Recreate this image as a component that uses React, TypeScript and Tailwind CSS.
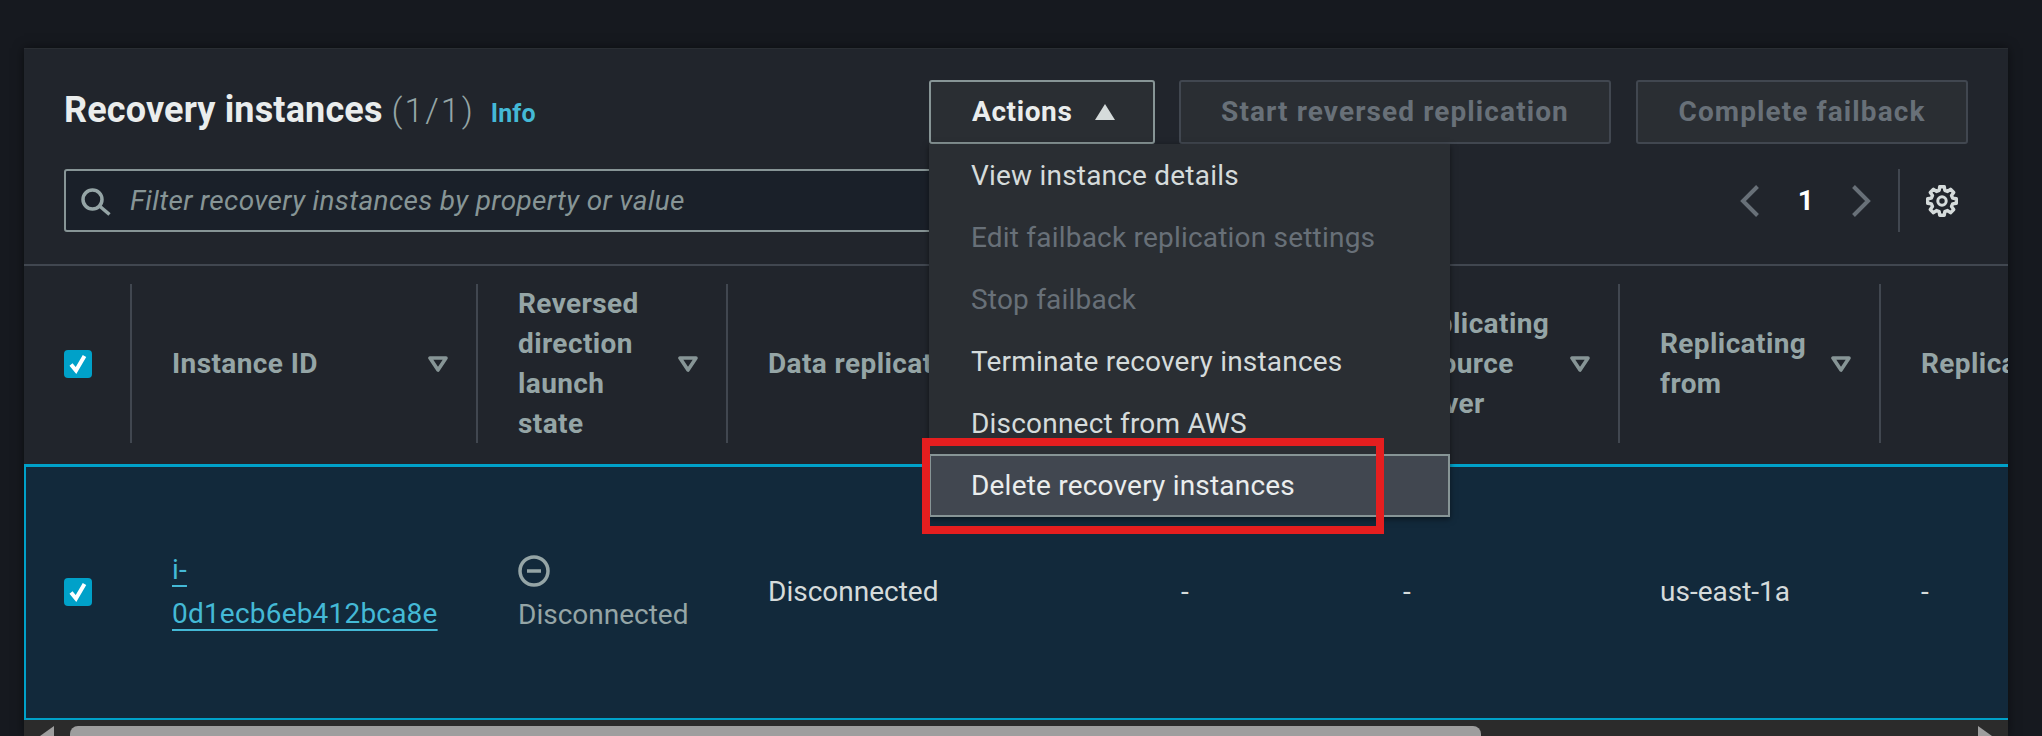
import React from "react";

const columns =
  "grid w-max grid-cols-[106px_346px_250px_413px_222px_257px_261px_300px]";
const rowColumns =
  "grid w-max grid-cols-[105px_346px_250px_413px_222px_257px_261px_300px]";

function CheckBox() {
  return (
    <div className="flex h-[28px] w-[28px] items-center justify-center rounded-[4px] bg-[#00a1c9]">
      <svg width="20" height="22" viewBox="0 0 20 22" fill="none">
        <path d="M3 11.5 L8 17.5 L16.5 3" stroke="#fff" strokeWidth="4" />
      </svg>
    </div>
  );
}

function FilterIcon() {
  return (
    <svg width="20" height="16" viewBox="0 0 20 16" fill="none" className="shrink-0">
      <path d="M2 2 H18 L10 14 Z" stroke="#879596" strokeWidth="3.6" strokeLinejoin="round" />
    </svg>
  );
}

function Chevron({ flip }: { flip?: boolean }) {
  return (
    <svg width="20" height="34" viewBox="0 0 20 34" fill="none" className={flip ? "rotate-180" : ""}>
      <path d="M17.5 2.5 L3 17 L17.5 31.5" stroke="#687078" strokeWidth="4" />
    </svg>
  );
}

function GearIcon() {
  // 8 teeth walked round the circle
  const pts: string[] = [];
  for (let i = 0; i < 8; i++) {
    const a = (i * Math.PI) / 4 - Math.PI / 2;
    const step = Math.PI / 4;
    const spots: [number, number][] = [
      [a - step * 0.2, 14.5],
      [a + step * 0.2, 14.5],
      [a + step * 0.33, 11],
      [a + step * 0.67, 11],
    ];
    spots.forEach(([t, r]) => pts.push(`${(17 + r * Math.cos(t)).toFixed(2)} ${(17 + r * Math.sin(t)).toFixed(2)}`));
  }
  return (
    <svg width="34" height="34" viewBox="0 0 34 34" fill="none">
      <path d={`M${pts.join(" L")} Z`} stroke="#d5dbdb" strokeWidth="3.4" strokeLinejoin="round" />
      <circle cx="17" cy="17" r="4.2" stroke="#d5dbdb" strokeWidth="3" />
    </svg>
  );
}

function HeaderCell({ label }: { label?: string }) {
  return (
    <div className="mt-[18px] mb-[21px] flex h-[159px] items-center justify-between gap-[14px] overflow-hidden border-l-2 border-[#414750] pl-[40px] pr-[28px]">
      {label && <span className="font-bold tracking-[0.4px] text-[#95a5a6]">{label}</span>}
      {label && <FilterIcon />}
    </div>
  );
}

function MenuItem({ label, disabled }: { label: string; disabled?: boolean }) {
  return (
    <div className={`flex h-[62px] items-center pt-[2px] pl-[42px] ${disabled ? "text-[#687078]" : "text-[#d5dbdb]"}`}>
      {label}
    </div>
  );
}

export default function App() {
  return (
    <div className="h-[736px] w-[2042px] overflow-hidden bg-[#16191f] pt-[48px] pr-[34px] pl-[24px] font-['Roboto',sans-serif] text-[28px] leading-[40px] tracking-[0.2px]">
      <div className="relative h-[688px] overflow-hidden border-t border-[#2a2e33] bg-[#21252c] shadow-[0_0_10px_rgba(0,0,0,0.5)]">
        <div className="border-b-2 border-[#414750] pt-[31px] pr-[40px] pb-[32px] pl-[40px]">
          <div className="flex h-[64px] items-center">
            <h2 className="flex items-baseline text-[36px] font-bold tracking-[0.15px] text-[#eaeded]">
              Recovery instances
              <span className="ml-[9px] text-[34px] font-light tracking-[2px] text-[#95a5a6]">(1/1)</span>
              <span className="ml-[16px] text-[25px] text-[#44b9d6]">Info</span>
            </h2>
            <div className="ml-auto flex gap-[25px]">
              <div className="relative z-10 -mr-[1px]">
                <button className="flex h-[64px] w-[226px] items-center gap-[23px] rounded-[3px] border-2 border-[#879596] bg-[#2a2e33] pl-[41px] font-bold tracking-[0.6px] text-[#eaeded]">
                  Actions
                  <svg width="20" height="16" viewBox="0 0 20 16">
                    <path d="M10 0 L20 16 H0 Z" fill="#d5dbdb" />
                  </svg>
                </button>
                <div className="absolute top-full left-0 w-[521px] bg-[#2a2e33] shadow-[0_2px_6px_rgba(0,0,0,0.5)]">
                  <MenuItem label="View instance details" />
                  <MenuItem label="Edit failback replication settings" disabled />
                  <MenuItem label="Stop failback" disabled />
                  <MenuItem label="Terminate recovery instances" />
                  <MenuItem label="Disconnect from AWS" />
                  <div className="flex h-[63px] items-center border-2 border-[#879596] bg-[#414750] pl-[40px] text-[#eaeded]">
                    Delete recovery instances
                  </div>
                  <div className="absolute top-[294px] left-[-7px] h-[96px] w-[462px] border-8 border-[#e51e1f]" />
                </div>
              </div>
              <button className="flex h-[64px] w-[432px] items-center justify-center rounded-[3px] border-2 border-[#414750] bg-[#2a2e33] font-bold tracking-[1.1px] text-[#687078]">
                Start reversed replication
              </button>
              <button className="flex h-[64px] w-[332px] items-center justify-center rounded-[3px] border-2 border-[#414750] bg-[#2a2e33] font-bold tracking-[1.1px] text-[#687078]">
                Complete failback
              </button>
            </div>
          </div>
          <div className="mt-[25px] flex h-[63px] items-center">
            <div className="flex h-full w-[1335px] items-center rounded-[3px] border-2 border-[#879596] bg-[#1a2029] pl-[15px]">
              <svg width="30" height="28" viewBox="0 0 30 28" fill="none" className="mt-[3px]">
                <circle cx="11.5" cy="11.5" r="9.5" stroke="#95a5a6" strokeWidth="3.5" />
                <path d="M18.5 18 L28.5 26.5" stroke="#95a5a6" strokeWidth="3.5" />
              </svg>
              <span className="ml-[19px] tracking-[0.35px] text-[#879596] italic">Filter recovery instances by property or value</span>
            </div>
            <div className="ml-auto flex h-full items-center pr-[9px]">
              <Chevron />
              <span className="mr-[37px] ml-[38px] font-bold text-white">1</span>
              <Chevron flip />
              <div className="ml-[27px] h-full border-l-2 border-[#414750]" />
              <div className="ml-[25px]">
                <GearIcon />
              </div>
            </div>
          </div>
        </div>

        <div className={columns}>
          <div className="mt-[18px] mb-[21px] flex h-[159px] items-center pl-[40px]">
            <CheckBox />
          </div>
          <HeaderCell label="Instance ID" />
          <HeaderCell label="Reversed direction launch state" />
          <HeaderCell label="Data replication status" />
          <HeaderCell />
          <HeaderCell label="Replicating a source server" />
          <HeaderCell label="Replicating from" />
          <HeaderCell label="Replicating to" />
        </div>

        <div className={`${rowColumns} h-[256px] border-2 border-t-[3px] border-[#00a1c9] bg-[#12293b] pb-[1px] tracking-normal text-[#d5dbdb]`}>
          <div className="flex items-center pl-[38px]">
            <CheckBox />
          </div>
          <div className="flex items-center pl-[41px]">
            <a className="w-[272px] leading-[44px] tracking-[0.2px] text-[#44b9d6] underline decoration-2 underline-offset-[6px]">i-0d1ecb6eb412bca8e</a>
          </div>
          <div className="flex flex-col justify-center pt-[5px] pl-[41px] text-[#95a5a6]">
            <svg width="32" height="32" viewBox="0 0 32 32" fill="none" className="mb-[8px]">
              <circle cx="16" cy="16" r="14" stroke="#95a5a6" strokeWidth="3.5" />
              <path d="M9 16 H23" stroke="#95a5a6" strokeWidth="3.5" />
            </svg>
            Disconnected
          </div>
          <div className="flex items-center pl-[41px]">Disconnected</div>
          <div className="flex items-center pl-[41px]">-</div>
          <div className="flex items-center pl-[41px]">-</div>
          <div className="flex items-center pl-[41px]">us-east-1a</div>
          <div className="flex items-center pl-[41px]">-</div>
        </div>

        <div className="flex h-[16px] bg-[#2b2b2b] pt-[6px]">
          <svg width="14" height="10" viewBox="0 0 14 10" className="ml-[16px]">
            <path d="M14 0 V10 H0 Z" fill="#9e9e9e" />
          </svg>
          <div className="ml-[16px] h-[10px] w-[1411px] rounded-t-[8px] bg-[#9e9e9e]" />
          <svg width="14" height="10" viewBox="0 0 14 10" className="ml-[497px]">
            <path d="M0 0 V10 H14 Z" fill="#9e9e9e" />
          </svg>
        </div>
      </div>
    </div>
  );
}
